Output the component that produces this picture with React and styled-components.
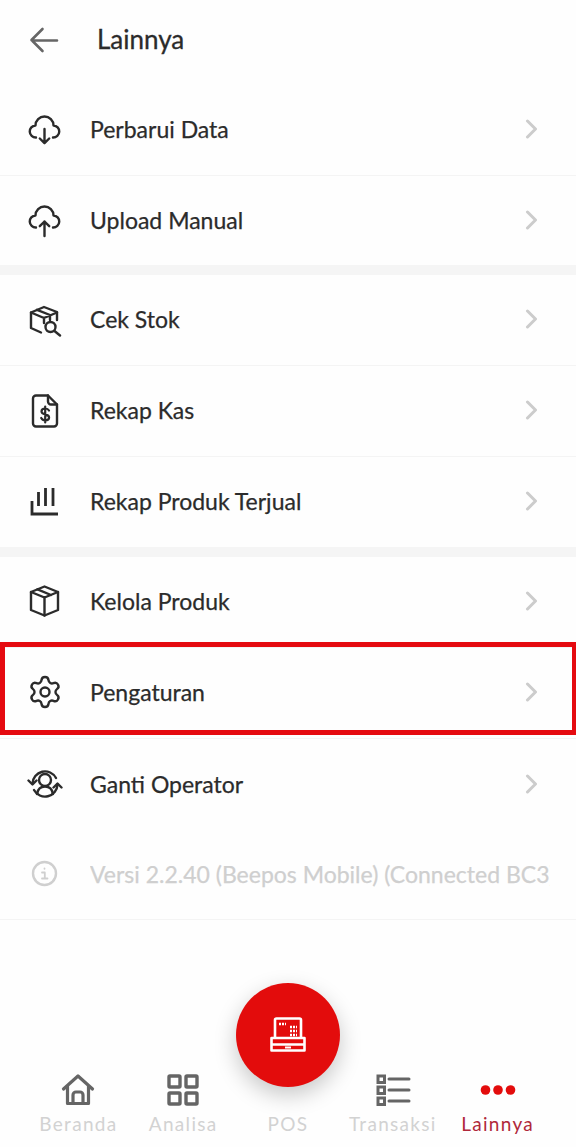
import React from "react";
import styled, { createGlobalStyle } from "styled-components";

const Global = createGlobalStyle`
  html, body { margin: 0; padding: 0; background: #fefefe; }
  * { box-sizing: border-box; }
`;

const Page = styled.div`
  position: relative;
  width: 576px;
  height: 1147px;
  overflow: hidden;
  display: flex;
  flex-direction: column;
  background: #fefefe;
  font-family: "Lato", "Noto Sans", sans-serif;
  color: #2b2b2b;
`;
const Header = styled.header`
  height: 84px;
  flex: none;
  display: flex;
  align-items: flex-start;
  padding: 22px 0 0 27px;
  gap: 34px;
`;
const Title = styled.h1`
  margin: -1px 0 0;
  font-size: 26px;
  line-height: 36px;
  font-weight: 400;
  -webkit-text-stroke: 0.3px #2b2b2b;
`;
const Section = styled.section`
  display: flex;
  flex-direction: column;
  border-bottom: ${(p) => (p.$band ? "10px solid #f5f5f5" : "none")};
`;
const Row = styled.div`
  position: relative;
  height: ${(p) => p.$h}px;
  flex: none;
  display: flex;
  align-items: center;
  padding: 0 26px 2px 27px;
  gap: 27px;
  border-bottom: ${(p) => (p.$last ? "none" : "1px solid #f4f4f4")};
`;
const IconBox = styled.span`
  width: 36px;
  height: 36px;
  flex: none;
  display: block;
  color: #2b2b2b;
  svg { display: block; width: 36px; height: 36px; }
`;
const Label = styled.span`
  flex: 1;
  min-width: 0;
  font-size: 23px;
  line-height: 30px;
  white-space: nowrap;
  overflow: hidden;
  -webkit-text-stroke: 0.25px currentColor;
  color: ${(p) => (p.$muted ? "#cfcfcf" : "#2b2b2b")};
`;
const Chevron = styled.svg`
  width: 14px;
  height: 20px;
  flex: none;
  margin-right: 11px;
`;
const Highlight = styled.div`
  position: absolute;
  left: 0;
  top: -6px;
  right: 0;
  height: 93px;
  border: 5px solid #e50a10;
  border-right-width: 4px;
  pointer-events: none;
`;
const Nav = styled.nav`
  position: relative;
  margin-top: auto;
  height: 75px;
  margin-bottom: 10px;
  display: grid;
  grid-template-columns: repeat(5, 1fr);
  padding: 0 26px;
`;
const NavItem = styled.div`
  display: flex;
  flex-direction: column;
  align-items: center;
  justify-content: flex-end;
`;
const NavIcon = styled.svg`
  width: 36px;
  height: 36px;
  margin-bottom: 3px;
  color: #656565;
`;
const NavLabel = styled.span`
  font-family: "Lato", "Noto Sans", sans-serif;
  font-size: 19px;
  line-height: 26px;
  letter-spacing: 1.3px;
  color: ${(p) => (p.$active ? "#b0283a" : "#d2d2d2")};
  white-space: nowrap;
`;
const Fab = styled.button`
  position: absolute;
  left: 236px;
  top: -79px;
  width: 104px;
  height: 104px;
  padding: 0;
  border: none;
  border-radius: 50%;
  background: #e30c0c;
  box-shadow: 0 8px 22px rgba(0, 0, 0, 0.22);
  display: flex;
  align-items: center;
  justify-content: center;
  svg { width: 38px; height: 38px; }
`;

const S = { fill: "none", stroke: "currentColor", strokeWidth: 2.4, strokeLinecap: "round", strokeLinejoin: "round", viewBox: "0 0 36 36" };
const cloud = "M9 26.500A6 6 0 0 1 8.500 14.500A9 9 0 0 1 26.500 14.500A6 6 0 0 1 26 26.500";

const Icons = {
  download: (
    <svg {...S}><path d={cloud} /><path d="M17.500 18v14M12.800 27.500l4.700 4.700 4.700-4.700" /></svg>
  ),
  upload: (
    <svg {...S}><path d={cloud} transform="translate(0 -1)" /><path d="M17.500 34V19.500M12.800 24.200l4.700-4.700 4.700 4.700" /></svg>
  ),
  stock: (
    <svg {...S}>
      <path d="M14 31.500 4 27V11.500L17 6l13 5v8" />
      <path d="M4 11.500 17 17l13-5.500M17 17v5M10 8.800l13 5.200v5" />
      <circle cx="23.500" cy="26" r="5" />
      <path d="m27.500 30 5.500 4.500" />
    </svg>
  ),
  cash: (
    <svg {...S}>
      <path d="M9 3.500h12l9 9v19a3 3 0 0 1-3 3H9a3 3 0 0 1-3-3v-25a3 3 0 0 1 3-3Z" />
      <path d="M21 3.500v6a3 3 0 0 0 3 3h6" />
      <path d="M22 18.500c-.7-1.300-2-2-3.800-2-2.200 0-3.700 1.200-3.700 2.900 0 4 7.600 2 7.600 6 0 1.700-1.700 2.900-3.900 2.900-1.800 0-3.200-.8-4-2.300M18.200 14.500v16" strokeWidth="2.200" />
    </svg>
  ),
  chart: (
    <svg {...S} strokeWidth="2.800" strokeLinecap="butt" strokeLinejoin="miter">
      <path d="M5 18v13h26M11.500 9v14M18.500 5v18M26 5v18" />
    </svg>
  ),
  box: (
    <svg {...S}>
      <path d="M17.500 3.500 31 9v18l-13.500 5.500L4 27V9Z" />
      <path d="M4 9l13.500 5.500L31 9M17.500 14.500v18M10.500 6.300 24 12" />
    </svg>
  ),
  gear: (
    <svg {...S} viewBox="0 0 24 24" strokeWidth="1.600">
      <path d="M9.671 4.136a2.340 2.340 0 0 1 4.659 0 2.340 2.340 0 0 0 3.319 1.915 2.340 2.340 0 0 1 2.330 4.033 2.340 2.340 0 0 0 0 3.831 2.340 2.340 0 0 1-2.330 4.033 2.340 2.340 0 0 0-3.319 1.915 2.340 2.340 0 0 1-4.659 0 2.340 2.340 0 0 0-3.320-1.915 2.340 2.340 0 0 1-2.330-4.033 2.340 2.340 0 0 0 0-3.831A2.340 2.340 0 0 1 6.350 6.051a2.340 2.340 0 0 0 3.319-1.915" />
      <circle cx="12" cy="12" r="3" />
    </svg>
  ),
  operator: (
    <svg {...S}>
      <path d="M5.500 17.500A12.500 12.500 0 0 1 29 12M30.500 18.500A12.500 12.500 0 0 1 7 24" />
      <path d="m1.500 14.500 4 4 4-4M34.500 21.500l-4-4-4 4" />
      <circle cx="18" cy="14" r="6" />
      <path d="M10 28c.8-5 4-7.500 8-7.500s7.200 2.500 8 7.500" />
    </svg>
  ),
  info: (
    <svg {...S} stroke="#cfcfcf">
      <circle cx="17.500" cy="17.500" r="11.500" />
      <path d="M17.500 12.500v.3M15 16.500h2.800v6M15 22.500h5.500" strokeWidth="1.800" />
    </svg>
  ),
};

const groups = [
  [
    ["download", "Perbarui Data", 92],
    ["upload", "Upload Manual", 89],
  ],
  [
    ["stock", "Cek Stok", 91],
    ["cash", "Rekap Kas", 91],
    ["chart", "Rekap Produk Terjual", 90],
  ],
];

const Arrow = () => (
  <Chevron viewBox="0 0 14 20" fill="none" stroke="#cccccc" strokeWidth="3" strokeLinecap="round" strokeLinejoin="round">
    <path d="m2.500 2 8 8-8 8" />
  </Chevron>
);

function MenuRow({ icon, text, last, h, children }) {
  return (
    <Row $last={last} $h={h}>
      {children}
      <IconBox>{Icons[icon]}</IconBox>
      <Label>{text}</Label>
      <Arrow />
    </Row>
  );
}

export default function App() {
  return (
    <Page>
      <Global />
      <Header>
        <svg width="36" height="36" viewBox="0 0 36 36" fill="none" stroke="#666" strokeWidth="2.600" strokeLinecap="round" strokeLinejoin="round">
          <path d="M30 18.500H5M15.500 7 4.500 18l11 11" />
        </svg>
        <Title>Lainnya</Title>
      </Header>
      {groups.map((group, i) => (
        <Section key={i} $band>
          {group.map(([icon, text, h], j) => (
            <MenuRow key={text} icon={icon} text={text} last={j === group.length - 1} h={h} />
          ))}
        </Section>
      ))}
      <Section>
        <MenuRow icon="box" text="Kelola Produk" h={91} />
        <MenuRow icon="gear" text="Pengaturan" h={91}>
          <Highlight />
        </MenuRow>
        <MenuRow icon="operator" text="Ganti Operator" h={91} last />
        <Row $h={90}>
          <IconBox>{Icons.info}</IconBox>
          <Label $muted>Versi 2.2.40 (Beepos Mobile) (Connected BC3)</Label>
        </Row>
      </Section>
      <Nav>
        <NavItem>
          <NavIcon viewBox="0 0 36 36" fill="none" stroke="currentColor" strokeWidth="3.200" strokeLinecap="round" strokeLinejoin="round">
            <path d="M3.500 17 18 4l14.500 13M7.500 14v17.500h21V14" />
            <path d="M13 31.500V23a3 3 0 0 1 3-3h4a3 3 0 0 1 3 3v8.500" />
          </NavIcon>
          <NavLabel>Beranda</NavLabel>
        </NavItem>
        <NavItem>
          <NavIcon viewBox="0 0 36 36" fill="none" stroke="currentColor" strokeWidth="3.400" strokeLinejoin="round">
            <rect x="4" y="4" width="11" height="11" rx="1" />
            <rect x="21" y="4" width="11" height="11" rx="1" />
            <rect x="4" y="21" width="11" height="11" rx="1" />
            <rect x="21" y="21" width="11" height="11" rx="1" />
          </NavIcon>
          <NavLabel>Analisa</NavLabel>
        </NavItem>
        <NavItem>
          <NavIcon as="div" />
          <NavLabel>POS</NavLabel>
        </NavItem>
        <NavItem>
          <NavIcon viewBox="0 0 36 36" fill="none" stroke="currentColor" strokeWidth="3">
            <rect x="3" y="4" width="6.500" height="6.500" />
            <rect x="3" y="15" width="6.500" height="6.500" />
            <rect x="3" y="26" width="6.500" height="6.500" />
            <path d="M14 7h20M14 18h20M14 29h20" strokeLinecap="round" />
          </NavIcon>
          <NavLabel>Transaksi</NavLabel>
        </NavItem>
        <NavItem>
          <NavIcon viewBox="0 0 36 36" fill="#e30c0c" stroke="none">
            <circle cx="5.500" cy="18" r="4.800" />
            <circle cx="18" cy="18" r="4.800" />
            <circle cx="30.500" cy="18" r="4.800" />
          </NavIcon>
          <NavLabel $active>Lainnya</NavLabel>
        </NavItem>
        <Fab aria-label="POS">
          <svg viewBox="0 0 38 38" fill="none" stroke="#fff" strokeWidth="2.600" strokeLinejoin="round">
            <path d="M6 22V4a1.500 1.500 0 0 1 1.500-1.500h23A1.500 1.500 0 0 1 32 4v18" />
            <path d="M2.500 22h33v12.500h-33zM2.500 28.500h33" />
            <path d="M10 8h7M21 11h7M21 15h7M21 19h7" strokeWidth="2.600" strokeDasharray="2 1" />
            <path d="M16 31.500h6" strokeWidth="2" />
          </svg>
        </Fab>
      </Nav>
    </Page>
  );
}
